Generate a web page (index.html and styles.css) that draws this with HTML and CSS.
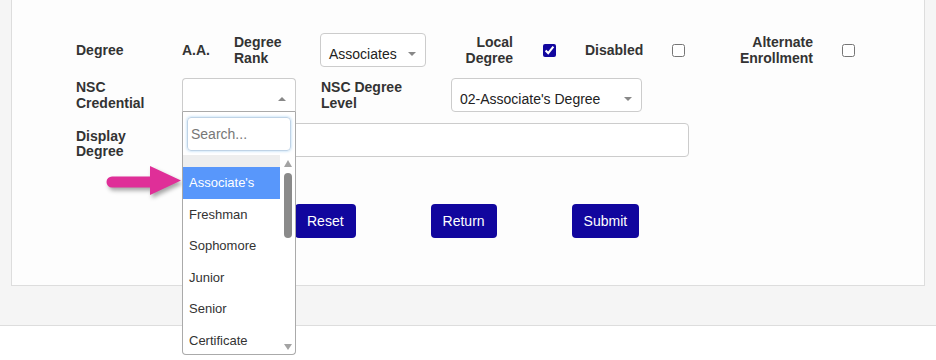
FILE: index.html
```html
<!DOCTYPE html>
<html lang="en">
<head>
<meta charset="UTF-8">
<meta name="viewport" content="width=device-width, initial-scale=1.0">
<title>Edit Degree</title>
<link rel="stylesheet" href="styles.css">
</head>
<body>

<div class="page">
    <div class="panel">
        <div class="form">
            <div class="row">
                <div class="lbl w106">Degree</div>
                <div class="lbl w52">A.A.</div>
                <div class="lbl w86">Degree<br>Rank</div>
                <div class="sel w106"><span>Associates</span><i class="caret"></i></div>
                <div class="lbl right w87">Local<br>Degree</div>
                <input type="checkbox" class="chk ml30" checked>
                <div class="lbl w87 ml29">Disabled</div>
                <input type="checkbox" class="chk">
                <div class="lbl right w128">Alternate<br>Enrollment</div>
                <input type="checkbox" class="chk ml29">
            </div>
            <div class="row">
                <div class="lbl w106">NSC<br>Credential</div>
                <div class="combo">
                    <div class="sel open w114"><span></span><i class="caret up"></i></div>
                    <div class="drop">
                        <div class="search">Search...</div>
                        <div class="list">
                            <div class="opts">
                                <div class="opt chosen"></div>
                                <div class="opt hl">Associate's</div>
                                <div class="opt">Freshman</div>
                                <div class="opt">Sophomore</div>
                                <div class="opt">Junior</div>
                                <div class="opt">Senior</div>
                                <div class="opt">Certificate</div>
                            </div>
                            <div class="bar">
                                <i class="tri up"></i>
                                <div class="thumb"></div>
                                <i class="tri down"></i>
                            </div>
                        </div>
                    </div>
                </div>
                <div class="lbl w130 ml25">NSC Degree<br>Level</div>
                <div class="sel w191"><span>02-Associate's Degree</span><i class="caret"></i></div>
            </div>
            <div class="row">
                <div class="lbl w106 low">Display<br>Degree</div>
                <div class="text w507"></div>
            </div>
        </div>
        <div class="actions">
            <button class="btn">Reset</button>
            <button class="btn">Return</button>
            <button class="btn">Submit</button>
        </div>
        <svg class="pointer" width="82" height="40" viewBox="0 0 82 40">
            <path d="M8 13.5 L46 13.5 L46 3 L77 17.5 L46 32 L46 24.5 L8 24.5 A5.5 5.5 0 0 1 8 13.5 Z" fill="#df2f98"/>
        </svg>
    </div>
</div>
<div class="footer"></div>

</body>
</html>
```

FILE: styles.css
```css
body {
    margin: 0;
    background-color: #f5f5f5;
    font-family: "Liberation Sans", Arial, sans-serif;
    font-size: 14px;
    color: #333;
}
.page {
    padding: 0 11px;
}
.panel {
    position: relative;
    background-color: #fdfdfd;
    border: 1px solid #ddd;
    border-top: none;
    padding: 33px 0 47px 64px;
}
.form {
    display: flex;
    flex-direction: column;
    gap: 11px;
}
.row {
    display: flex;
    align-items: center;
}
.lbl {
    font-weight: bold;
    line-height: 15.5px;
    flex-shrink: 0;
    padding-top: 1px;
}
.lbl.right {
    text-align: right;
}
.lbl.low {
    padding-top: 4px;
    margin-bottom: -4px;
}
.chk {
    width: 13px;
    height: 13px;
    margin: 0;
    accent-color: #12079f;
    flex-shrink: 0;
}
.w52 { width: 52px; }
.w86 { width: 86px; }
.w87 { width: 87px; }
.w106 { width: 106px; }
.w114 { width: 114px; }
.w128 { width: 128px; }
.w130 { width: 130px; }
.w191 { width: 191px; }
.w507 { width: 507px; }
.ml25 { margin-left: 25px; }
.ml29 { margin-left: 29px; }
.ml30 { margin-left: 30px; }

.sel {
    height: 34px;
    box-sizing: border-box;
    border: 1px solid #ccc;
    border-radius: 4px;
    background-color: #fff;
    color: #222;
    display: flex;
    align-items: center;
    justify-content: space-between;
    padding: 7px 9px 0 8px;
    flex-shrink: 0;
}
.sel.open {
    border-radius: 4px 4px 0 0;
    border-bottom-color: #aaa;
}
.caret {
    width: 0;
    height: 0;
    border-left: 4px solid transparent;
    border-right: 4px solid transparent;
    border-top: 4px solid #888;
}
.caret.up {
    border-top: none;
    border-bottom: 4px solid #888;
}
.text {
    height: 34px;
    box-sizing: border-box;
    border: 1px solid #ccc;
    border-radius: 4px;
    background-color: #fff;
}

.combo {
    position: relative;
}
.drop {
    position: absolute;
    left: 0;
    top: 100%;
    width: 114px;
    height: 243px;
    box-sizing: border-box;
    border: 1px solid #aaa;
    border-top: none;
    border-radius: 0 0 4px 4px;
    background-color: #fff;
    z-index: 3;
    display: flex;
    flex-direction: column;
    overflow: hidden;
}
.search {
    margin: 5px 4px 4px;
    height: 34px;
    box-sizing: border-box;
    border: 1px solid #bfd3e6;
    border-radius: 4px;
    box-shadow: 0 0 3px rgba(102, 175, 233, 0.55);
    padding: 0 3px;
    line-height: 32px;
    color: #777;
}
.list {
    flex: 1;
    display: flex;
    overflow: hidden;
}
.opts {
    flex: 1;
    overflow: hidden;
}
.opt {
    font-size: 13px;
    line-height: 19.5px;
    padding: 6px;
    color: #333;
}
.opt.chosen {
    height: 12px;
    padding: 0;
    background-color: #eee;
}
.opt.hl {
    background-color: #5897fb;
    color: #fff;
}
.bar {
    width: 15px;
    display: flex;
    flex-direction: column;
    align-items: center;
    padding-top: 5px;
}
.tri {
    width: 0;
    height: 0;
    border-left: 4.5px solid transparent;
    border-right: 4.5px solid transparent;
}
.tri.up {
    border-bottom: 7px solid #a3a3a3;
}
.tri.down {
    border-top: 6px solid #a3a3a3;
    margin-top: auto;
    margin-bottom: 4px;
}
.thumb {
    width: 8px;
    height: 65px;
    margin-top: 6px;
    border-radius: 4px;
    background-color: #8a8a8a;
}

.actions {
    display: flex;
    gap: 75px;
    margin-top: 47px;
    margin-left: 219px;
}
.btn {
    height: 34px;
    padding: 0 12px;
    border: none;
    border-radius: 4px;
    background-color: #11069e;
    color: #fff;
    font-family: "Liberation Sans", Arial, sans-serif;
    font-size: 14px;
    cursor: pointer;
}
.pointer {
    position: absolute;
    left: 92px;
    top: 163px;
    filter: drop-shadow(2px 3px 2px rgba(0, 0, 0, 0.35));
}
.footer {
    margin-top: 39px;
    border-top: 1px solid #ddd;
    background-color: #fff;
    height: 34px;
}
```
